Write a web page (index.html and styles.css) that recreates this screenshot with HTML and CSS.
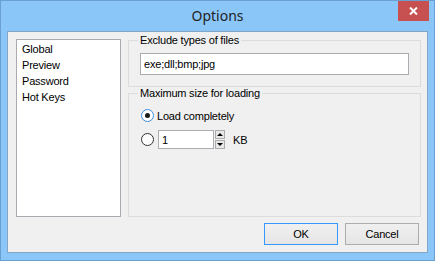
FILE: index.html
```html
<!DOCTYPE html>
<html>
    <head>
        <title>Options</title>
        <link rel="stylesheet" href="styles.css">
    </head>
    <body>
        <div class="window">
            <div class="titlebar">
                <span class="title">Options</span>
                <button class="close">
                    <svg width="9" height="8" viewBox="0 0 9 8"><path d="M1 0.5 L8 7.5 M8 0.5 L1 7.5" stroke="#fff" stroke-width="2"/></svg>
                </button>
            </div>
            <div class="client">
                <div class="main">
                    <ul class="pages">
                        <li>Global</li>
                        <li>Preview</li>
                        <li>Password</li>
                        <li>Hot Keys</li>
                    </ul>
                    <div class="settings">
                        <fieldset class="group first">
                            <legend>Exclude types of files</legend>
                            <input class="field wide" type="text" value="exe;dll;bmp;jpg">
                        </fieldset>
                        <fieldset class="group second">
                            <legend>Maximum size for loading</legend>
                            <div class="row">
                                <span class="radio on"></span>
                                <span>Load completely</span>
                            </div>
                            <div class="row">
                                <span class="radio"></span>
                                <input class="field small" type="text" value="1">
                                <div class="spin">
                                    <span class="spin-btn"><i class="up"></i></span>
                                    <span class="spin-btn"><i class="down"></i></span>
                                </div>
                                <span class="unit">KB</span>
                            </div>
                        </fieldset>
                    </div>
                </div>
                <div class="buttons">
                    <button class="btn default">OK</button>
                    <button class="btn">Cancel</button>
                </div>
            </div>
        </div>
    </body>
</html>
```

FILE: styles.css
```css
body {
    margin: 0;
    font-family: "Liberation Sans", Arial, sans-serif;
    font-size: 11px;
    letter-spacing: -0.2px;
    color: #000;
}
.window {
    box-sizing: border-box;
    width: 435px;
    height: 261px;
    border: 1px solid #6a9fd2;
    background-color: #8bc6f8;
    display: flex;
    flex-direction: column;
}
.titlebar {
    height: 30px;
    display: grid;
    grid-template-columns: 1fr auto 1fr;
}
.title {
    grid-column: 2;
    font-family: "Noto Sans", sans-serif;
    font-size: 14px;
    letter-spacing: 0;
    color: #222;
    line-height: 30px;
}
.close {
    grid-column: 3;
    justify-self: end;
    align-self: start;
    margin: 0 5px 0 0;
    width: 31px;
    height: 20px;
    padding: 0;
    border: none;
    background-color: #c75050;
    display: flex;
    align-items: center;
    justify-content: center;
}
.client {
    margin: 0 6px;
    height: 222px;
    box-sizing: border-box;
    border: 1px solid #83a5c6;
    background-color: #f0f0f0;
    padding: 2px 6px 7px 8px;
    display: flex;
    flex-direction: column;
}
.main {
    height: 183px;
    display: flex;
    gap: 7px;
}
.pages {
    list-style: none;
    margin: 5px 0 0 0;
    padding: 1px 0 0 5px;
    box-sizing: border-box;
    width: 105px;
    height: 178px;
    border: 1px solid #a9abb1;
    background-color: #fff;
}
.pages li {
    line-height: 16px;
}
.settings {
    width: 293px;
    display: flex;
    flex-direction: column;
}
.group {
    margin: 0;
    padding: 7px 0 11px 11px;
    border: 1px solid #dcdcdc;
    box-sizing: border-box;
}
.group legend {
    padding: 0 2px;
    margin-left: -2px;
    line-height: 12px;
}
.group.first {
    height: 53px;
}
.group.second {
    flex: 1;
    padding-top: 7px;
}
.field {
    box-sizing: border-box;
    margin: 0;
    border: 1px solid #abadb3;
    background-color: #fff;
    font-family: "Liberation Sans", Arial, sans-serif;
    font-size: 11px;
    letter-spacing: -0.2px;
    color: #000;
    padding: 0 3px;
    outline: none;
}
.field.wide {
    display: block;
    width: 269px;
    height: 22px;
}
.field.small {
    width: 56px;
    height: 19px;
    margin-left: 4px;
}
.row {
    height: 19px;
    display: flex;
    align-items: center;
    gap: 3px;
    margin-left: 1px;
}
.row + .row {
    margin-top: 5px;
    gap: 0;
}
.radio {
    box-sizing: border-box;
    width: 13px;
    height: 13px;
    border: 1px solid #333;
    border-radius: 50%;
    background-color: #fff;
    display: flex;
    align-items: center;
    justify-content: center;
}
.radio.on {
    border-color: #3d8ee0;
}
.radio.on::after {
    content: "";
    width: 5px;
    height: 5px;
    border-radius: 50%;
    background-color: #1a1a1a;
}
.spin {
    display: flex;
    flex-direction: column;
    height: 19px;
    margin-left: 1px;
}
.spin-btn {
    box-sizing: border-box;
    width: 10px;
    height: 9px;
    border: 1px solid #acacac;
    background-color: #e8e8e8;
    display: flex;
    align-items: center;
    justify-content: center;
}
.spin-btn + .spin-btn {
    margin-top: 1px;
}
.spin-btn i {
    width: 0;
    height: 0;
    border-left: 3px solid transparent;
    border-right: 3px solid transparent;
}
.spin-btn i.up {
    border-bottom: 3px solid #000;
}
.spin-btn i.down {
    border-top: 3px solid #000;
}
.unit {
    margin-left: 8px;
}
.buttons {
    margin-top: 6px;
    padding-right: 2px;
    display: flex;
    justify-content: flex-end;
    gap: 7px;
}
.btn {
    box-sizing: border-box;
    width: 74px;
    height: 22px;
    margin: 0;
    border: 1px solid #acacac;
    background: linear-gradient(#f0f0f0, #e5e5e5);
    font-family: "Liberation Sans", Arial, sans-serif;
    font-size: 11px;
    letter-spacing: -0.2px;
    color: #000;
    padding: 0;
}
.btn.default {
    border-color: #3399ff;
}
```
